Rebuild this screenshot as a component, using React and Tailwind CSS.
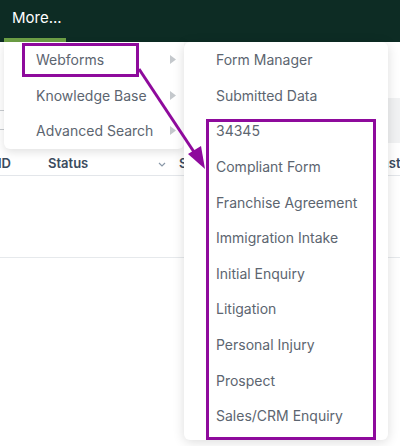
import React from "react";

const webforms = [
  "Form Manager",
  "Submitted Data",
  "34345",
  "Compliant Form",
  "Franchise Agreement",
  "Immigration Intake",
  "Initial Enquiry",
  "Litigation",
  "Personal Injury",
  "Prospect",
  "Sales/CRM Enquiry",
];

const more = ["Webforms", "Knowledge Base", "Advanced Search"];

function Caret() {
  return (
    <svg width="6" height="9" viewBox="0 0 6 9" className="shrink-0">
      <path d="M0 0 L6 4.5 L0 9 Z" fill="#c4c8cc" />
    </svg>
  );
}

export default function App() {
  return (
    <div
      className="relative w-[400px] h-[446px] overflow-hidden bg-white"
      style={{ fontFamily: "Inter, 'Noto Sans', sans-serif" }}
    >
      <header className="h-[42px] bg-[#0d2c24] flex items-stretch">
        <div className="ml-[4px] w-[62px] pl-[8px] pt-[5px] border-b-[4px] border-[#6c9f45]">
          <span className="text-white text-[15px] leading-[20px]">More...</span>
        </div>
      </header>

      {/* page behind the menus */}
      <div className="h-[106px] flex flex-col">
        <div className="h-[58px]" />
        <div className="flex items-start">
          <div className="mt-[10px] w-[380px] h-[20px] border-y border-[#c8ccd0]" />
          <div className="w-[20px] h-[45px] -mt-[2px] bg-[#f1f2f3]" />
        </div>
      </div>
      <div className="h-[28px] pt-[4px] flex items-center border-b border-[#e3e6ea] text-[13px] font-semibold text-[#3b4b5e]">
        <span className="w-[50px] -ml-[2px]">ID</span>
        <span className="w-[110px]">Status</span>
        <svg width="8" height="6" viewBox="0 0 8 6" className="mt-[3px]">
          <path d="M1 1 L4 4 L7 1" stroke="#8a98a8" strokeWidth="1.2" fill="none" />
        </svg>
        <span className="ml-[13px]">S</span>
        <span className="ml-auto -mr-[30px] w-[56px] whitespace-nowrap">Last Id</span>
      </div>
      <div className="h-[82px] border-b border-[#e6e9ec]" />

      {/* More... menu */}
      <div className="absolute left-[4px] top-[42px] w-[180px] bg-white rounded-b-md shadow-[0_3px_10px_rgba(0,0,0,0.12)]">
        {more.map((m) => (
          <div key={m} className="h-[35.5px] flex items-center pl-[32px] pr-[8px] text-[14px] text-[#5c6570]">
            <span className="flex-1">{m}</span>
            <Caret />
          </div>
        ))}
      </div>

      {/* Webforms submenu */}
      <div className="absolute left-[184px] top-[42px] w-[204px] pb-[6px] bg-white rounded-md shadow-[0_2px_12px_rgba(0,0,0,0.14)]">
        {webforms.map((w) => (
          <div key={w} className="h-[35.6px] flex items-center pl-[32px] text-[14px] text-[#5c6570]">
            {w}
          </div>
        ))}
      </div>

      {/* annotations */}
      <div className="absolute left-[22px] top-[43px] w-[117px] h-[34px] border-[3px] border-[#8e0a9c]" />
      <div className="absolute left-[206px] top-[119px] w-[170px] h-[321px] border-[3px] border-[#8e0a9c]" />
      <svg className="absolute left-0 top-0 pointer-events-none" width="400" height="446">
        <line x1="139" y1="69" x2="196" y2="155" stroke="#8e0a9c" strokeWidth="3" />
        <path d="M205 169 L188 154 L201 146 Z" fill="#8e0a9c" />
      </svg>
    </div>
  );
}
